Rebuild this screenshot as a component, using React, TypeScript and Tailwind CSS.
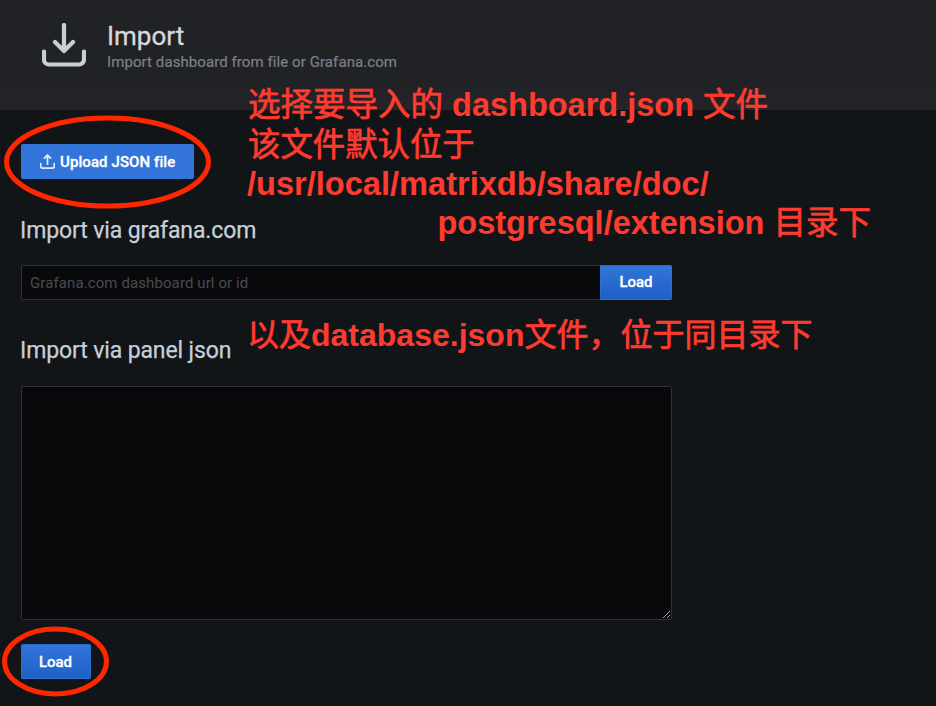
import type { ReactNode } from 'react';

function TrayIcon({ up = false, className, stroke }: { up?: boolean; className: string; stroke: string }) {
  return (
    <svg className={className} viewBox="0 0 44 44" fill="none" stroke={stroke} strokeWidth={up ? 5 : 4.2} strokeLinecap="round" strokeLinejoin="round">
      <path d="M2 28.5v8a5 5 0 0 0 5 5h30a5 5 0 0 0 5-5v-8" />
      {up ? <path d="M22 30V3M13 12l9-9 9 9" /> : <path d="M22 2v26M13 19l9 9 9-9" />}
    </svg>
  );
}

function Cjk({ children }: { children: ReactNode }) {
  return <span className="font-normal [-webkit-text-stroke:0.7px_#ff3b30]">{children}</span>;
}

function Note({ className, children }: { className: string; children: ReactNode }) {
  return (
    <div
      className={`absolute whitespace-pre font-bold leading-[39px] text-[#ff3b30] [font-family:'Liberation_Sans','Noto_Sans_CJK_SC',sans-serif] ${className}`}
    >
      {children}
    </div>
  );
}

export default function App() {
  return (
    <div className="relative h-[706px] w-[936px] overflow-hidden bg-[#111518] text-[#c7d0d9] [font-family:Roboto,sans-serif]">
      <header className="flex h-[110px] bg-linear-to-b from-[#212226] from-75% to-[#252528] pl-[42px] pt-[23px]">
        <TrayIcon className="h-[44px] w-[44px]" stroke="#c7d0d9" />
        <div className="ml-[21px]">
          <h1 className="-mt-[2px] text-[26px] leading-[30px] text-[#d8d9da] [-webkit-text-stroke:0.3px_#d8d9da]">Import</h1>
          <p className="mt-[1px] text-[15px] leading-[20px] tracking-[0.080px] text-[#7b8087] [-webkit-text-stroke:0.2px_#7b8087]">Import dashboard from file or Grafana.com</p>
        </div>
      </header>

      <main className="flex w-[672px] flex-col items-start pl-[21px] pt-[34px]">
        <button className="flex h-[35px] w-[173px] items-center rounded-[2px] bg-[#3274d9] pl-[19px] text-[15px] font-medium text-white">
          <TrayIcon up className="mr-[5px] h-[15px] w-[15px]" stroke="#e6eefb" />
          <span className="pt-px tracking-[0.090px] [-webkit-text-stroke:0.3px_white]">Upload JSON file</span>
        </button>

        <h2 className="-ml-px mt-[38px] text-[23px] leading-[28px] tracking-[-0.120px] [-webkit-text-stroke:0.25px_#c7d0d9]">Import via grafana.com</h2>
        <div className="mt-[20px] flex h-[35px] w-[651px]">
          <input
            className="min-w-0 flex-1 rounded-l-[2px] border border-r-0 border-[#2c3235] bg-[#09090c] px-[8px] pt-px text-[15px] tracking-[0.100px] outline-none placeholder:text-[#464c54]"
            placeholder="Grafana.com dashboard url or id"
          />
          <button className="w-[72px] rounded-r-[2px] border border-[#3274d9]/50 bg-linear-to-b from-[#3274d9] to-[#1f60c4] text-[15px] font-medium text-white [-webkit-text-stroke:0.3px_white]">Load</button>
        </div>

        <h2 className="-ml-px mt-[37px] text-[23px] leading-[28px] tracking-[-0.120px] [-webkit-text-stroke:0.25px_#c7d0d9]">Import via panel json</h2>
        <div className="mt-[21px] flex h-[234px] w-[651px] items-end justify-end rounded-[2px] border border-[#2c3235] bg-[#09090c]">
          <svg className="h-[9px] w-[9px]" viewBox="0 0 9 9" stroke="#a5a5a5" strokeWidth="1">
            <path d="M1 8L8 1M5 8L8 5" />
          </svg>
        </div>

        <button className="mt-[24px] h-[35px] w-[70px] rounded-[2px] border border-[#3274d9]/50 bg-linear-to-b from-[#3274d9] to-[#1f60c4] pr-px pt-px text-[15px] font-medium text-white [-webkit-text-stroke:0.3px_white]">Load</button>
      </main>

      <svg className="pointer-events-none absolute inset-0 h-[706px] w-[936px]" fill="none" stroke="#ff2600" strokeWidth="5">
        <ellipse cx="107.500" cy="162" rx="101" ry="44" />
        <ellipse cx="55.500" cy="661.500" rx="51" ry="32.500" />
      </svg>

      <Note className="left-[248px] top-[86px] text-[32.500px]"><Cjk>选择要导入的</Cjk> dashboard.json <Cjk>文件</Cjk></Note>
      <Note className="left-[248px] top-[126px] text-[32.400px]"><Cjk>该文件默认位于</Cjk></Note>
      <Note className="left-[247px] top-[164px] text-[32.600px]">/usr/local/matrixdb/share/doc/</Note>
      <Note className="left-[437.500px] top-[204px] text-[32.500px]">postgresql/extension <Cjk>目录下</Cjk></Note>
      <Note className="left-[247px] top-[316px] text-[32px]"><Cjk>以及</Cjk>database.json<Cjk>文件，位于同目录下</Cjk></Note>
    </div>
  );
}
